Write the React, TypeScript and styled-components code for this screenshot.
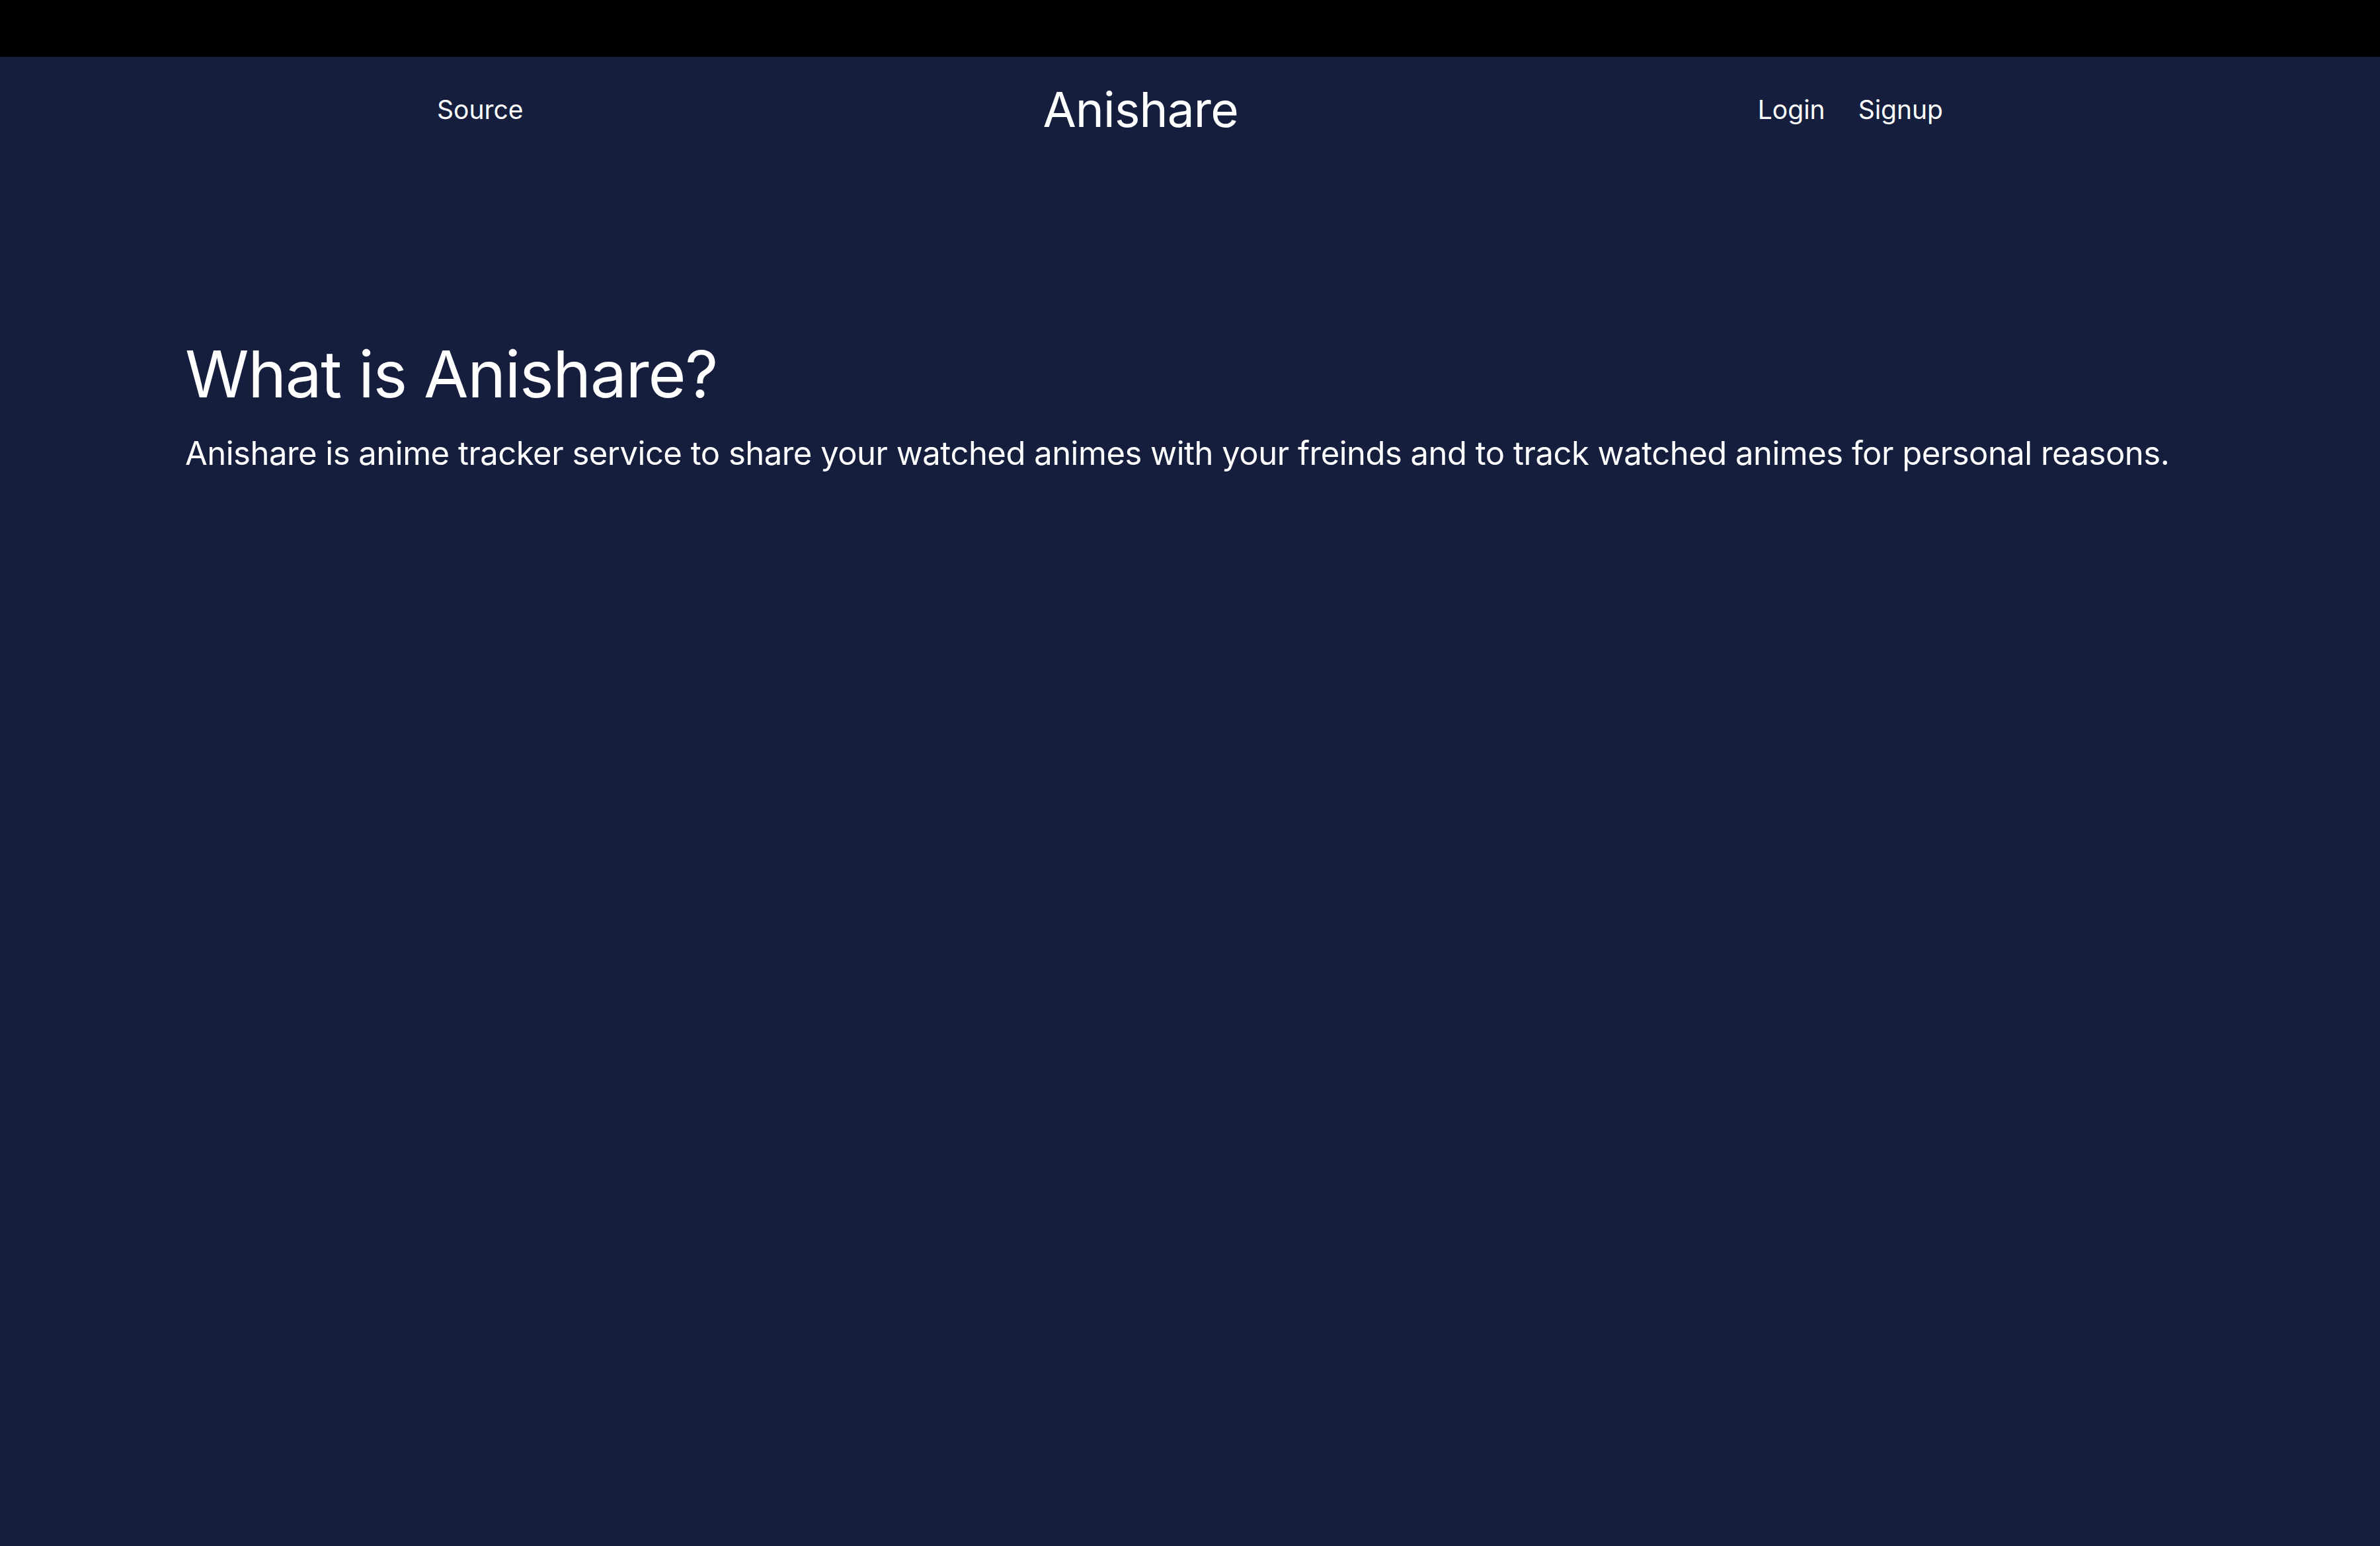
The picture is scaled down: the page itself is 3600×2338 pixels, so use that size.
import React from "react";
import styled, { createGlobalStyle } from "styled-components";

const GlobalStyle = createGlobalStyle`
  html, body {
    margin: 0;
    padding: 0;
    background: #151f3d;
    font-family: Inter, "Noto Sans", sans-serif;
    color: #ffffff;
  }
  #root {
    min-height: 100vh;
  }
`;

const Page = styled.div`
  min-height: 100vh;
  display: flex;
  flex-direction: column;
  background: #151f3d;
`;

const TopBar = styled.div`
  height: 86px;
  background: #000000;
`;

const Nav = styled.nav`
  width: 2278px;
  height: 158px;
  margin: 0 auto;
  display: flex;
  align-items: center;
  justify-content: space-between;
`;

const NavLink = styled.a`
  font-size: 39px;
  color: #ffffff;
  text-decoration: none;
`;

const Logo = styled.a`
  font-size: 73px;
  letter-spacing: -0.9px;
  color: #ffffff;
  text-decoration: none;
`;

const NavGroup = styled.div`
  display: flex;
  align-items: center;
  gap: 50px;
`;

const Main = styled.main`
  padding: 263px 280px 0;
  display: flex;
  flex-direction: column;
  gap: 30px;
`;

const Heading = styled.h1`
  margin: 0;
  font-size: 98px;
  font-weight: 400;
  letter-spacing: -1.4px;
  line-height: 1.21;
`;

const Lead = styled.p`
  margin: 0;
  font-size: 49px;
  letter-spacing: -0.51px;
  line-height: 1.21;
`;

export default function App() {
  return (
    <>
      <GlobalStyle />
      <Page>
        <TopBar />
        <Nav>
          <NavLink href="#">Source</NavLink>
          <Logo href="#">Anishare</Logo>
          <NavGroup>
            <NavLink href="#">Login</NavLink>
            <NavLink href="#">Signup</NavLink>
          </NavGroup>
        </Nav>
        <Main>
          <Heading>What is Anishare?</Heading>
          <Lead>
            Anishare is anime tracker service to share your watched animes with your freinds and to track watched animes for personal reasons.
          </Lead>
        </Main>
      </Page>
    </>
  );
}
